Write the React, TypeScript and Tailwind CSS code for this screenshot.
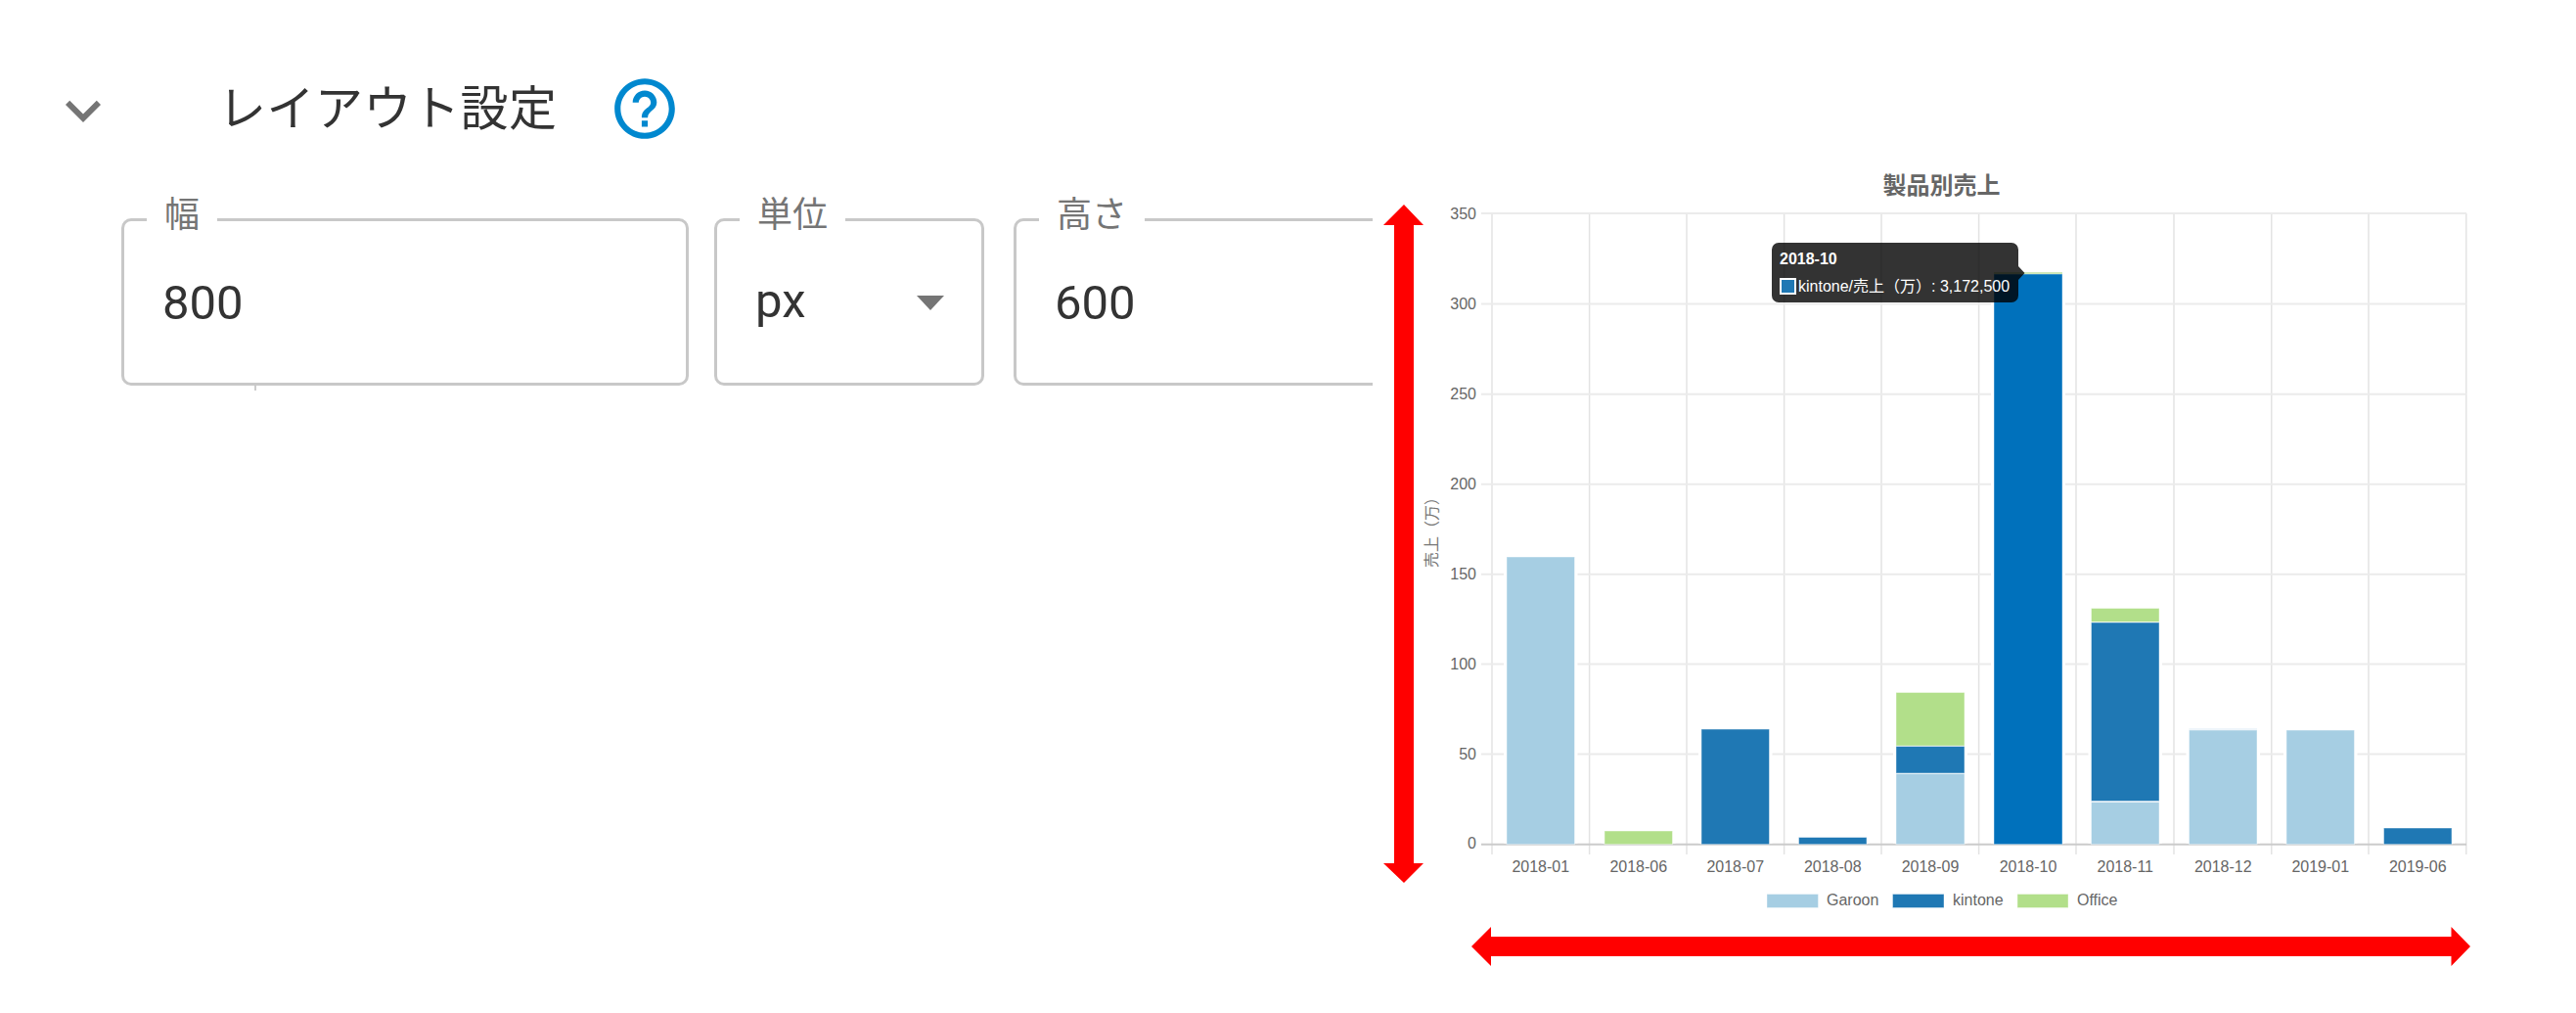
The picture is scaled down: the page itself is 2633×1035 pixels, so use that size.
import React from 'react';

const GAROON = '#a6cee3';
const KINTONE = '#1f78b4';
const OFFICE = '#b2df8a';
const ACTIVE = '#0071bc';

const GRID_X = [1525, 1624.6, 1724, 1823.6, 1923, 2022.6, 2122, 2222, 2321.8, 2421, 2520.8];
const TICKS = [
  { label: '350', y: 218 },
  { label: '300', y: 310.5 },
  { label: '250', y: 402.7 },
  { label: '200', y: 494.8 },
  { label: '150', y: 586.8 },
  { label: '100', y: 678.6 },
  { label: '50', y: 770.5 },
];
const BASE_Y = 862.7;

const BARS = [
  { label: '2018-01', x: 1540, w: 69.5, parts: [{ top: 569, bottom: BASE_Y, fill: GAROON }] },
  { label: '2018-06', x: 1640, w: 69.5, parts: [{ top: 849, bottom: BASE_Y, fill: OFFICE }] },
  { label: '2018-07', x: 1739, w: 69.5, parts: [{ top: 745, bottom: BASE_Y, fill: KINTONE }] },
  { label: '2018-08', x: 1838.5, w: 69.5, parts: [{ top: 855.5, bottom: BASE_Y, fill: KINTONE }] },
  {
    label: '2018-09',
    x: 1938,
    w: 70,
    parts: [
      { top: 707.5, bottom: 762, fill: OFFICE },
      { top: 762.5, bottom: 790, fill: KINTONE },
      { top: 790.5, bottom: BASE_Y, fill: GAROON },
    ],
  },
  { label: '2018-10', x: 2038, w: 70, parts: [{ top: 280, bottom: BASE_Y, fill: ACTIVE }] },
  {
    label: '2018-11',
    x: 2137.5,
    w: 69.5,
    parts: [
      { top: 621.5, bottom: 635.5, fill: OFFICE },
      { top: 636, bottom: 818.5, fill: KINTONE },
      { top: 819.5, bottom: BASE_Y, fill: GAROON },
    ],
  },
  { label: '2018-12', x: 2237.5, w: 69.5, parts: [{ top: 746, bottom: BASE_Y, fill: GAROON }] },
  { label: '2019-01', x: 2337, w: 69.5, parts: [{ top: 746, bottom: BASE_Y, fill: GAROON }] },
  { label: '2019-06', x: 2436.5, w: 69.5, parts: [{ top: 846, bottom: BASE_Y, fill: KINTONE }] },
];

const LEGEND = [
  { label: 'Garoon', x: 1806, w: 52.5, textX: 1867, fill: GAROON },
  { label: 'kintone', x: 1934.5, w: 52.5, textX: 1996, fill: KINTONE },
  { label: 'Office', x: 2062, w: 52, textX: 2123, fill: OFFICE },
];

type FieldProps = {
  label: string;
  className: string;
  children: React.ReactNode;
};

const Field: React.FC<FieldProps> = ({ label, className, children }) => (
  <div
    className={`relative flex h-[171px] shrink-0 items-center rounded-[10px] border-[3px] border-[#c8c8c8] pl-[39px] pt-[2px] text-[49px] text-[#333] ${className}`}
  >
    <span className="absolute -top-[24px] left-[23px] bg-white px-[18px] text-[36px] leading-[36px] text-[#757575]">
      {label}
    </span>
    {children}
  </div>
);

const LayoutSettings: React.FC = () => (
  <div className="h-[1035px] w-[1403px] shrink-0 overflow-hidden pl-[49px] pt-[74px] font-['Roboto','Noto_Sans_CJK_JP',sans-serif]">
    <div className="flex h-[74px] items-center">
      <svg viewBox="0 0 24 24" className="mt-[4px] h-[72px] w-[72px] fill-[#757575]">
        <path d="M16.59 8.59L12 13.17 7.41 8.59 6 10l6 6 6-6z" />
      </svg>
      <h2 className="ml-[102px] w-[399px] text-[49px] font-normal leading-none tracking-[0.5px] text-[#333]">
        レイアウト設定
      </h2>
      <svg viewBox="0 0 24 24" className="h-[74px] w-[74px] fill-[#0088cf]">
        <path d="M11 18h2v-2h-2v2zm1-16C6.48 2 2 6.48 2 12s4.48 10 10 10 10-4.48 10-10S17.52 2 12 2zm0 18c-4.41 0-8-3.59-8-8s3.59-8 8-8 8 3.59 8 8-3.59 8-8 8zm0-14c-2.21 0-4 1.79-4 4h2c0-1.1.9-2 2-2s2 .9 2 2c0 2-3 1.75-3 5h2c0-2.25 3-2.5 3-5 0-2.21-1.79-4-4-4z" />
      </svg>
    </div>

    <div className="ml-[75px] mt-[75px] flex">
      <Field label="幅" className="w-[580px]">
        800
        <span className="absolute -bottom-[8px] left-[133px] h-[5px] w-[2px] bg-[#ccc]" />
      </Field>
      <Field label="単位" className="ml-[26px] w-[276px]">
        <span className="-mt-[4px]">px</span>
        <svg viewBox="0 0 28 15" className="ml-auto mr-[38px] h-[15px] w-[28px] fill-[#757575]">
          <path d="M0 0h28L14 15z" />
        </svg>
      </Field>
      <Field label="高さ" className="ml-[30px] w-[600px]">
        600
      </Field>
    </div>
  </div>
);

const SalesChart: React.FC = () => (
  <svg
    viewBox="1403 0 1230 1035"
    className="h-[1035px] w-[1230px] shrink-0 font-['Liberation_Sans','Noto_Sans_CJK_JP',sans-serif] text-[16px]"
  >
    <text x="1984.5" y="189" textAnchor="middle" dominantBaseline="central" fontSize="24" fontWeight="700" fill="#666">
      製品別売上
    </text>

    {/* grid */}
    {GRID_X.map((x) => (
      <line key={x} x1={x} x2={x} y1="218" y2="873" stroke="#e3e3e3" strokeWidth="1.5" />
    ))}
    {TICKS.map((t) => (
      <line key={t.label} x1="1514" x2="2521" y1={t.y} y2={t.y} stroke="#ebebeb" strokeWidth="2" />
    ))}
    <line x1="1514" x2="2521" y1={BASE_Y} y2={BASE_Y} stroke="#cbcbcb" strokeWidth="2" />

    {[...TICKS, { label: '0', y: BASE_Y - 1 }].map((t) => (
      <text key={t.label} x="1509" y={t.y} textAnchor="end" dominantBaseline="central" fill="#666">
        {t.label}
      </text>
    ))}
    <text
      transform="translate(1463 540) rotate(-90)"
      textAnchor="middle"
      dominantBaseline="central"
      fill="#777"
    >
      売上（万）
    </text>

    {/* bars */}
    {BARS.map((bar) => (
      <g key={bar.label}>
        <rect x={bar.x - 3} y={bar.parts[0].top - 3} width={bar.w + 6} height={BASE_Y - bar.parts[0].top + 2} fill="#fff" />
        {bar.parts.map((p) => (
          <rect
            key={p.top}
            x={bar.x}
            y={p.top}
            width={bar.w}
            height={p.bottom - p.top}
            fill={p.fill}
            stroke="#fff"
            strokeOpacity="0.45"
            strokeWidth="1"
          />
        ))}
        <text x={bar.x + bar.w / 2} y="885" textAnchor="middle" dominantBaseline="central" fill="#666">
          {bar.label}
        </text>
      </g>
    ))}
    <rect x="2038" y="278" width="70" height="2" fill="#cfe9ba" />
    <rect x="2237.5" y="744" width="69.5" height="2" fill="#eef5fa" />

    {/* legend */}
    {LEGEND.map((item) => (
      <g key={item.label}>
        <rect x={item.x} y="913.5" width={item.w} height="14" fill={item.fill} stroke="#fff" strokeOpacity="0.4" />
        <text x={item.textX} y="919" dominantBaseline="central" fill="#666">
          {item.label}
        </text>
      </g>
    ))}

    {/* tooltip */}
    <path
      d="M1818 248h238a7 7 0 0 1 7 7v17l6.500 7-6.500 7v16a7 7 0 0 1-7 7h-238a7 7 0 0 1-7-7v-47a7 7 0 0 1 7-7z"
      fill="#000"
      fillOpacity="0.8"
    />
    <text x="1819" y="264" dominantBaseline="central" fontWeight="700" fill="#fff">
      2018-10
    </text>
    <rect x="1820" y="285" width="15" height="15" fill={KINTONE} stroke="#fff" strokeWidth="2" />
    <text x="1838" y="292" dominantBaseline="central" fill="#fff">
      kintone/売上（万）: 3,172,500
    </text>

    {/* size arrows */}
    <polygon points="1435,209 1455,230 1445,230 1445,882 1455,882 1435,902 1414,882 1425,882 1425,230 1414,230" fill="#f00" />
    <polygon points="1504,967 1524,947 1524,957 2505.500,957 2505.500,947 2525,967 2505.500,987 2505.500,977 1524,977 1524,987" fill="#f00" />
  </svg>
);

const App: React.FC = () => (
  <div className="flex h-[1035px] w-[2633px] overflow-hidden bg-white">
    <LayoutSettings />
    <SalesChart />
  </div>
);

export default App;
